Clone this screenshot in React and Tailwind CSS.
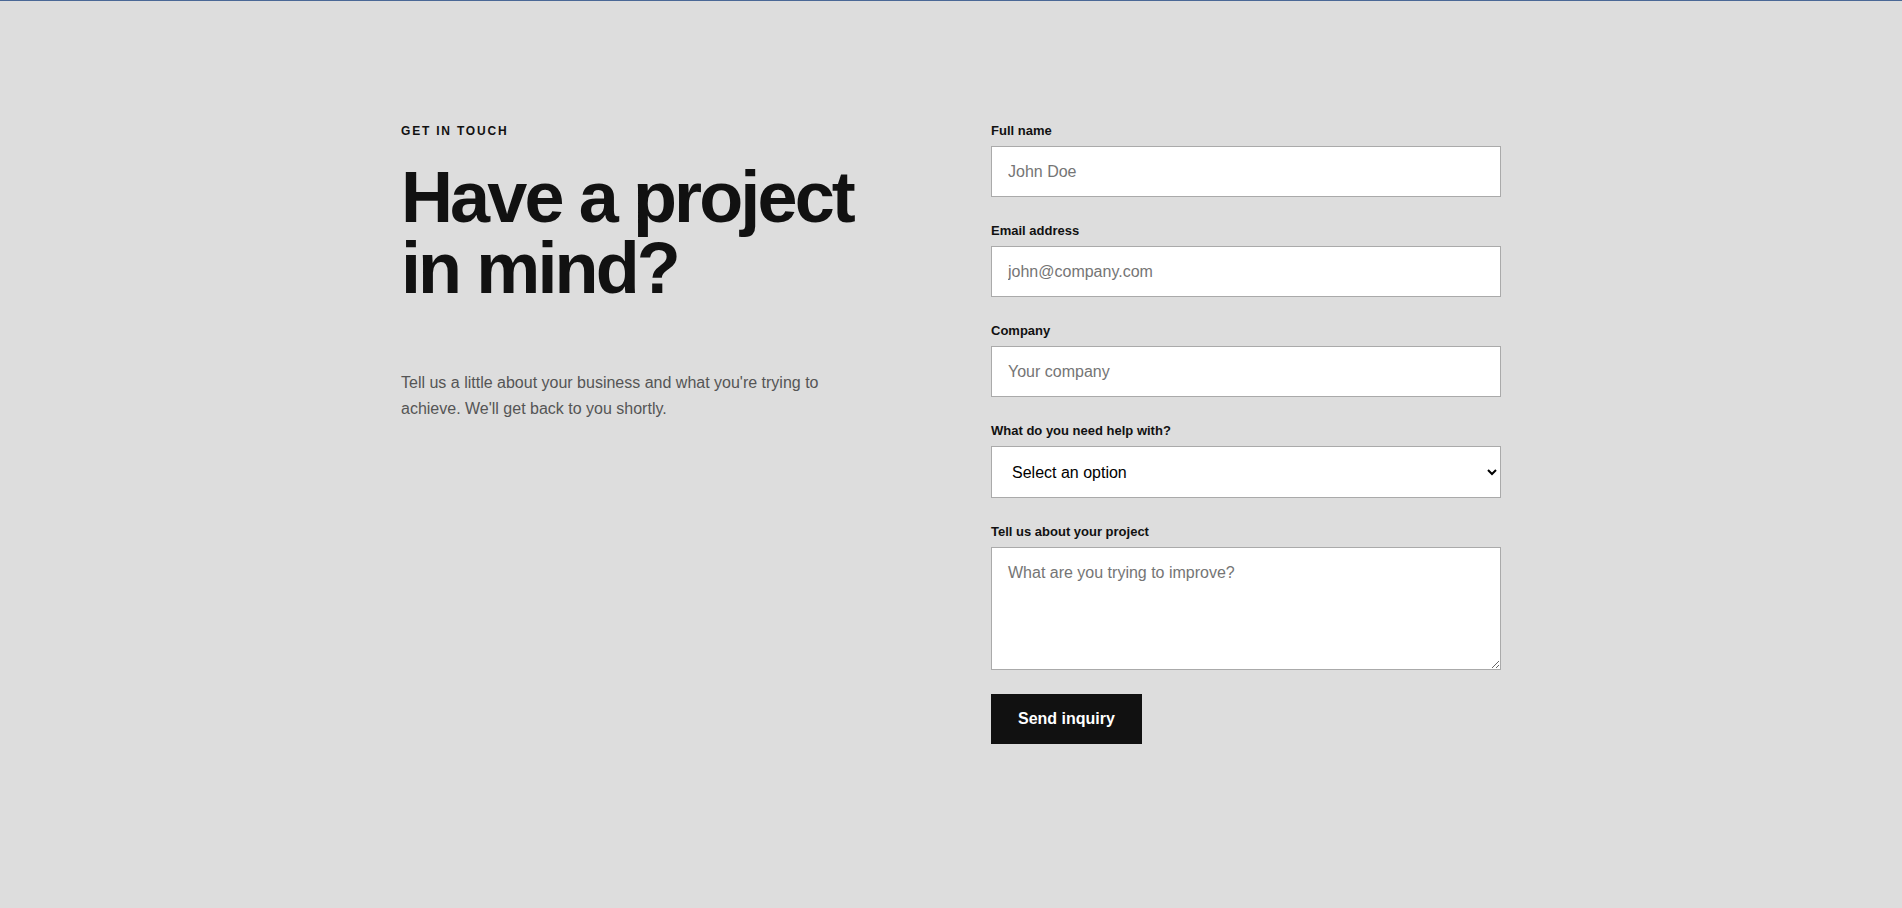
import { useState } from "react";

const fields = [
  { id: "name", label: "Full name", type: "text", placeholder: "John Doe" },
  { id: "email", label: "Email address", type: "email", placeholder: "john@company.com" },
  { id: "company", label: "Company", type: "text", placeholder: "Your company" },
];

const services = ["Website redesign", "Brand identity", "Product design", "Something else"];

export default function App() {
  const [form, setForm] = useState({ name: "", email: "", company: "", service: "", message: "" });

  const update = (key) => (e) => setForm({ ...form, [key]: e.target.value });

  return (
    <main
      className="min-h-screen bg-[#dddddd] border-t border-[#4a6896] text-[#111]"
      style={{ fontFamily: '"Liberation Sans", Arial, sans-serif' }}
    >
      <div className="max-w-[1100px] mx-auto pt-[118px] grid grid-cols-2 gap-20">
        <div>
          <p className="text-[12px] leading-[24px] font-bold tracking-[0.15em] uppercase">Get in touch</p>
          <h1 className="mt-[19px] text-[72px] leading-[71px] font-bold tracking-[-0.04em]">
            Have a project in mind?
          </h1>
          <p className="mt-[66px] max-w-[440px] text-[16px] leading-[1.65] text-[#555]">
            Tell us a little about your business and what you're trying to achieve. We'll get back to you shortly.
          </p>
        </div>

        <form className="mt-0.5 space-y-6" onSubmit={(e) => e.preventDefault()}>
          {fields.map((f) => (
            <div key={f.id}>
              <label htmlFor={f.id} className="block text-[13px] leading-[19px] font-bold mb-1.5">
                {f.label}
              </label>
              <input
                id={f.id}
                type={f.type}
                placeholder={f.placeholder}
                value={form[f.id]}
                onChange={update(f.id)}
                className="block w-full h-[51px] px-4 bg-white border border-[#aaaaaa] text-[16px] outline-none placeholder:text-[#757575]"
              />
            </div>
          ))}

          <div>
            <label htmlFor="service" className="block text-[13px] leading-[19px] font-bold mb-1.5">
              What do you need help with?
            </label>
            <select
              id="service"
              value={form.service}
              onChange={update("service")}
              className="block w-full h-[52px] px-4 bg-white border border-[#aaaaaa] text-[16px] text-black outline-none"
            >
              <option value="">Select an option</option>
              {services.map((s) => (
                <option key={s} value={s}>
                  {s}
                </option>
              ))}
            </select>
          </div>

          <div>
            <label htmlFor="message" className="block text-[13px] leading-[19px] font-bold mb-1.5">
              Tell us about your project
            </label>
            <textarea
              id="message"
              placeholder="What are you trying to improve?"
              value={form.message}
              onChange={update("message")}
              className="block w-full h-[123px] px-4 py-[15px] leading-[19px] bg-white border border-[#aaaaaa] text-[16px] outline-none placeholder:text-[#757575]"
            />
          </div>

          <button
            type="submit"
            className="block bg-[#111] text-white text-[16px] font-bold leading-5 px-[27px] py-[15px]"
          >
            Send inquiry
          </button>
        </form>
      </div>
    </main>
  );
}
